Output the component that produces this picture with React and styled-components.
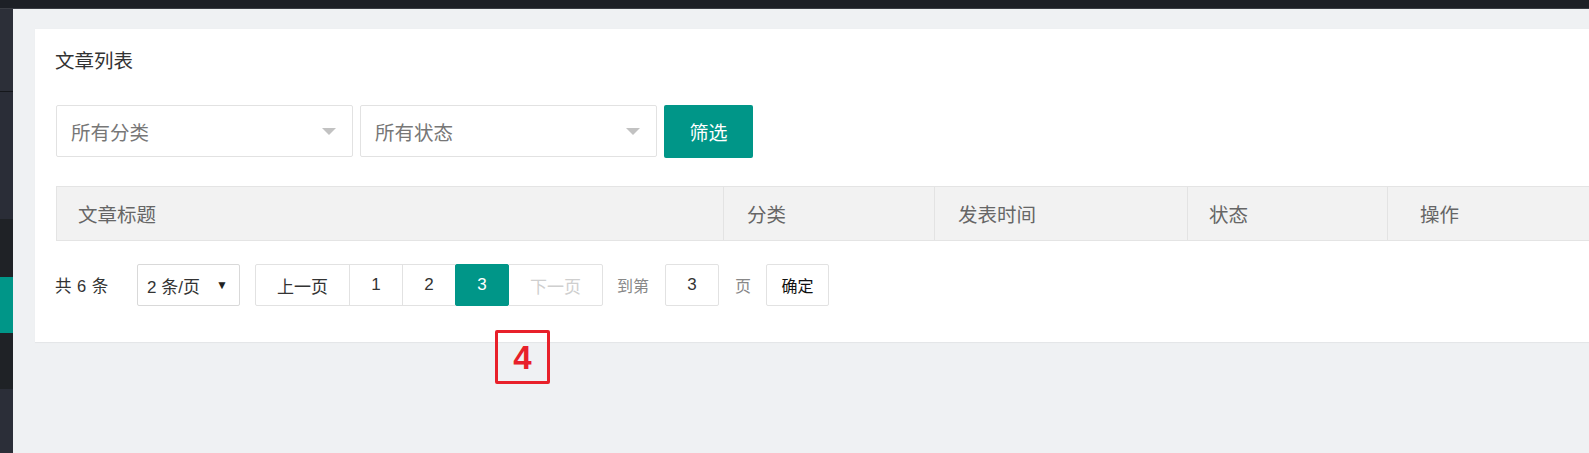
import React from "react";
import styled, { createGlobalStyle } from "styled-components";

const Global = createGlobalStyle`
  html, body { margin: 0; padding: 0; }
  body {
    width: 1589px;
    height: 453px;
    overflow: hidden;
    background: #eef0f2;
    font-family: "Liberation Sans", "Noto Sans CJK SC", sans-serif;
  }
  * { box-sizing: border-box; }
`;

const Shell = styled.div`
  display: flex;
  flex-direction: column;
  width: 1589px;
  height: 453px;
  overflow: hidden;
`;

const TopBar = styled.div`
  height: 9px;
  flex: none;
  background: #1d2026;
  border-bottom: 1px solid #3a3d44;
`;

const Body = styled.div`
  flex: 1;
  display: flex;
  min-height: 0;
`;

const SideStrip = styled.div`
  width: 13px;
  flex: none;
  display: flex;
  flex-direction: column;
`;

const StripSeg = styled.div`
  height: ${(p) => p.$h}px;
  flex: ${(p) => (p.$grow ? 1 : "none")};
  background: ${(p) => p.$c};
  border-bottom: ${(p) => (p.$line ? "1px solid #15171b" : "none")};
`;

const Main = styled.div`
  flex: 1;
  position: relative;
  padding: 20px 0 0 22px;
  background: #eff1f3;
  min-width: 0;
`;

const Panel = styled.div`
  background: #fff;
  padding: 20px 0 36px 21px;
  border-bottom: 1px solid #e4e6e8;
  box-shadow: 0 0 1px rgba(0, 0, 0, 0.04);
`;

const Title = styled.div`
  font-size: 19.5px;
  line-height: 24px;
  color: #333;
  margin-left: -1px;
`;

const FilterRow = styled.div`
  display: flex;
  gap: 7px;
  margin-top: 32px;
  align-items: stretch;
`;

const Select = styled.div`
  width: ${(p) => p.$w}px;
  height: 52px;
  border: 1px solid #e2e2e2;
  border-radius: 2px;
  display: flex;
  align-items: center;
  justify-content: space-between;
  padding: 0 16px 0 14px;
  font-size: 19.5px;
  color: #777;
  background: #fff;
`;

const Caret = styled.span`
  width: 0;
  height: 0;
  border-left: 7px solid transparent;
  border-right: 7px solid transparent;
  border-top: 7px solid #c2c2c2;
`;

const FilterButton = styled.button`
  width: 89px;
  height: 53px;
  border: none;
  border-radius: 2px;
  background: #009688;
  color: #fff;
  font-family: inherit;
  font-size: 19px;
  padding: 0;
`;

const TableHead = styled.div`
  margin-top: 28px;
  display: grid;
  grid-template-columns: 666px 211px 253px 200px 1fr;
  height: 55px;
  background: #f2f2f2;
  border: 1px solid #e4e4e4;
  border-right: none;
`;

const HeadCell = styled.div`
  display: flex;
  align-items: center;
  padding-left: ${(p) => p.$pad}px;
  font-size: 19.5px;
  color: #666;
  border-left: ${(p) => (p.$first ? "none" : "1px solid #e3e3e3")};
`;

const PagerRow = styled.div`
  margin-top: 23px;
  display: flex;
  align-items: center;
  height: 42px;
  font-size: 16.5px;
  color: #333;
`;

const Count = styled.span`
  margin-left: -1px;
  width: 82px;
  word-spacing: 1px;
`;

const SizeSelect = styled.div`
  width: 103px;
  height: 42px;
  border: 1px solid #d9d9d9;
  border-radius: 2px;
  display: flex;
  align-items: center;
  justify-content: space-between;
  padding: 0 11px 0 9px;
  font-size: 17px;
  color: #333;
  margin-right: 16px;
`;

const SmallCaret = styled.span`
  font-size: 12px;
  color: #222;
`;

const PageGroup = styled.div`
  display: flex;
  height: 42px;
`;

const PageBtn = styled.div`
  width: ${(p) => p.$w}px;
  height: 42px;
  display: flex;
  align-items: center;
  justify-content: center;
  border: 1px solid #e2e2e2;
  margin-left: -1px;
  font-size: 17px;
  background: ${(p) => (p.$active ? "#009688" : "#fff")};
  border-color: ${(p) => (p.$active ? "#009688" : "#e2e2e2")};
  color: ${(p) => (p.$active ? "#fff" : p.$disabled ? "#cfcfcf" : "#333")};
  border-radius: ${(p) => p.$radius || "0"};
  position: ${(p) => (p.$active ? "relative" : "static")};
  z-index: ${(p) => (p.$active ? 1 : 0)};
`;

const SkipLabel = styled.span`
  color: #888;
  font-size: 16px;
  margin-left: ${(p) => p.$ml}px;
`;

const SkipInput = styled.div`
  width: 54px;
  height: 42px;
  margin-left: 16px;
  border: 1px solid #e2e2e2;
  border-radius: 2px;
  display: flex;
  align-items: center;
  justify-content: center;
  font-size: 17px;
  color: #333;
`;

const ConfirmBtn = styled.div`
  width: 63px;
  height: 42px;
  margin-left: 15px;
  border: 1px solid #e2e2e2;
  border-radius: 2px;
  display: flex;
  align-items: center;
  justify-content: center;
  font-size: 16px;
  color: #111;
`;

const Marker = styled.div`
  position: absolute;
  left: 482px;
  top: 321px;
  width: 55px;
  height: 54px;
  border: 3px solid #e8202a;
  border-radius: 2px;
  display: flex;
  align-items: center;
  justify-content: center;
  color: #e8202a;
  font-family: "Liberation Sans", Arial, sans-serif;
  font-weight: 700;
  font-size: 33px;
  line-height: 1;
`;

const strip = [
  { h: 83, c: "#2c2f38", line: true },
  { h: 127, c: "#2a2d37" },
  { h: 58, c: "#1f2226" },
  { h: 56, c: "#009688" },
  { h: 56, c: "#1f2226" },
  { grow: true, c: "#2b2e38" },
];

const heads = [
  { t: "文章标题", pad: 21 },
  { t: "分类", pad: 23 },
  { t: "发表时间", pad: 23 },
  { t: "状态", pad: 21 },
  { t: "操作", pad: 32 },
];

export default function App() {
  return (
    <>
      <Global />
      <Shell>
        <TopBar />
        <Body>
          <SideStrip>
            {strip.map((s, i) => (
              <StripSeg key={i} $h={s.h} $c={s.c} $grow={s.grow} $line={s.line} />
            ))}
          </SideStrip>
          <Main>
            <Panel>
              <Title>文章列表</Title>
              <FilterRow>
                <Select $w={297}>
                  <span>所有分类</span>
                  <Caret />
                </Select>
                <Select $w={297}>
                  <span>所有状态</span>
                  <Caret />
                </Select>
                <FilterButton>筛选</FilterButton>
              </FilterRow>
              <TableHead>
                {heads.map((h, i) => (
                  <HeadCell key={h.t} $pad={h.pad} $first={i === 0}>
                    {h.t}
                  </HeadCell>
                ))}
              </TableHead>
              <PagerRow>
                <Count>共 6 条</Count>
                <SizeSelect>
                  <span>2 条/页</span>
                  <SmallCaret>▼</SmallCaret>
                </SizeSelect>
                <PageGroup>
                  <PageBtn $w={95} $radius="2px 0 0 2px">上一页</PageBtn>
                  <PageBtn $w={54}>1</PageBtn>
                  <PageBtn $w={54}>2</PageBtn>
                  <PageBtn $w={54} $active $radius="2px">3</PageBtn>
                  <PageBtn $w={95} $disabled $radius="0 2px 2px 0">下一页</PageBtn>
                </PageGroup>
                <SkipLabel $ml={14}>到第</SkipLabel>
                <SkipInput>3</SkipInput>
                <SkipLabel $ml={16}>页</SkipLabel>
                <ConfirmBtn>确定</ConfirmBtn>
              </PagerRow>
            </Panel>
            <Marker>4</Marker>
          </Main>
        </Body>
      </Shell>
    </>
  );
}
